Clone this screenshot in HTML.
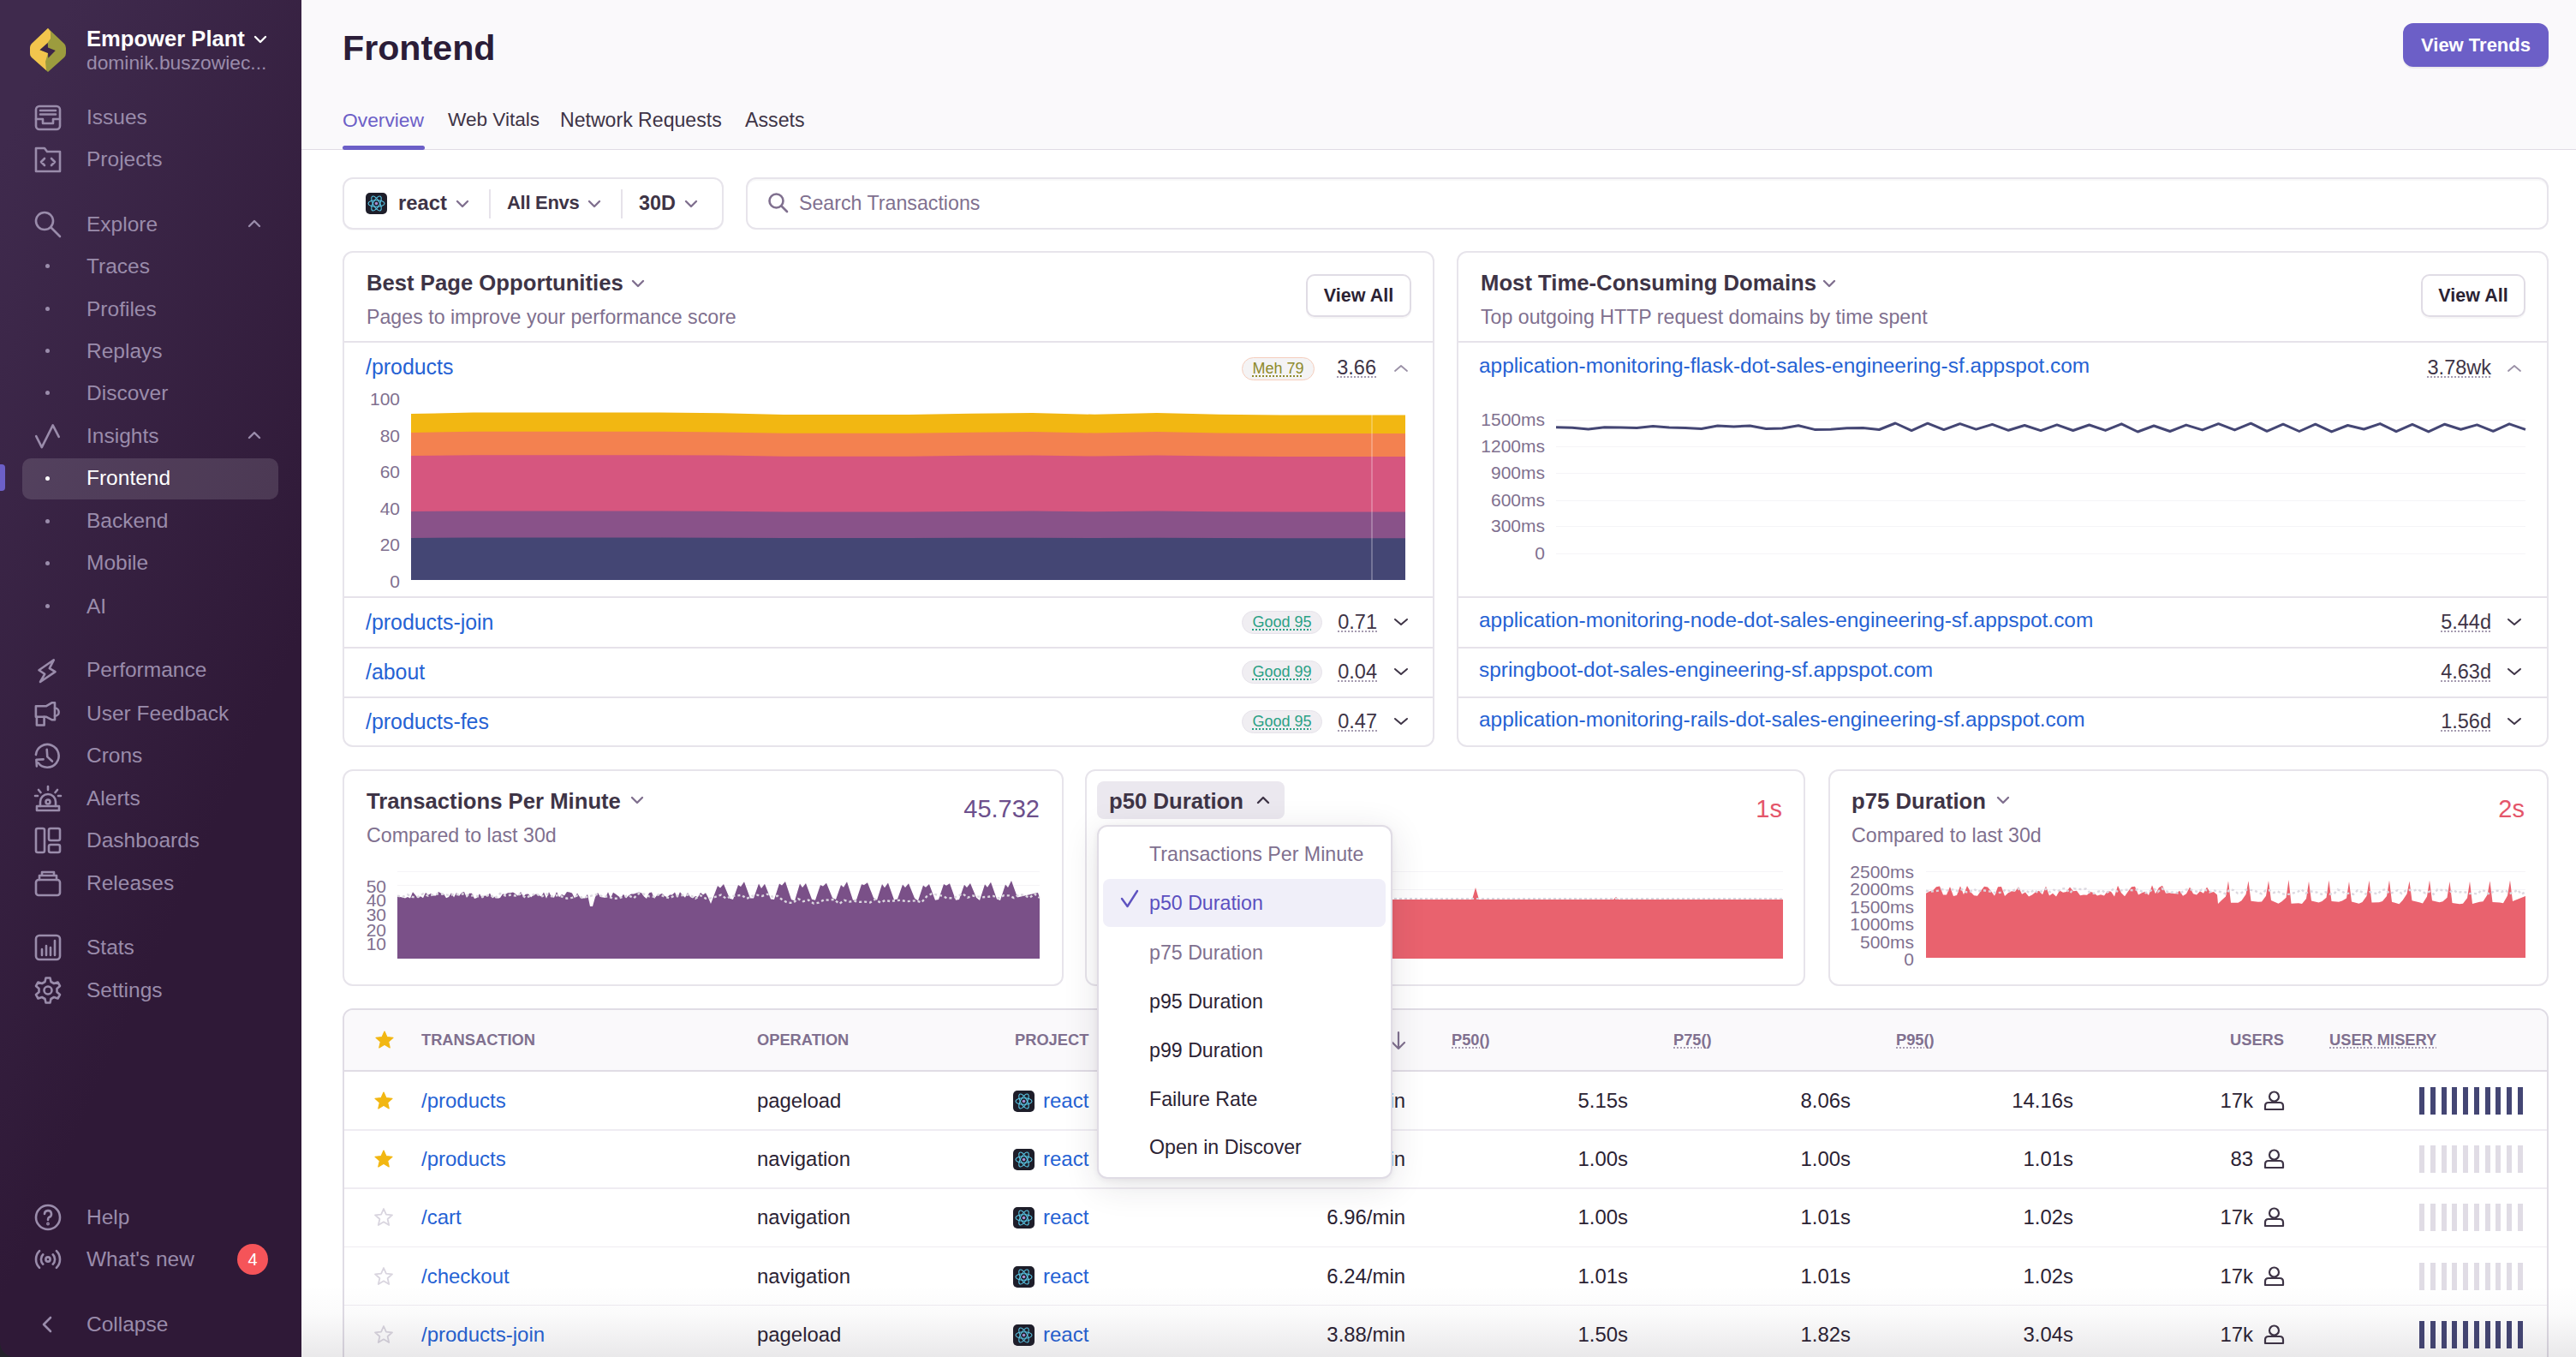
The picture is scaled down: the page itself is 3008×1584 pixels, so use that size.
<!DOCTYPE html>
<html><head><meta charset="utf-8"><title>Frontend</title><style>
*{box-sizing:border-box;margin:0;padding:0}
html,body{width:3008px;height:1584px;overflow:hidden;background:#fff}
#corner{position:absolute;left:0;top:1560px;width:30px;height:24px;background:#24222b}
body{font-family:"Liberation Sans",sans-serif;color:#2b2233;position:relative}
.a{position:absolute;white-space:nowrap}
#sb{position:absolute;left:0;top:0;width:352px;height:1584px;border-bottom-left-radius:17px;
 background:linear-gradient(294.17deg,#2f1937 35.57%,#3f2a4d 92.42%,#3f2a4d 92.42%);overflow:hidden}
.si{position:absolute;left:101px;height:40px;line-height:40px;font-size:24.5px;color:#9a8cab;white-space:nowrap}
.ic{position:absolute;left:38px;width:36px;height:36px}
.dot{position:absolute;left:53px;width:5px;height:5px;border-radius:50%;background:#9a8cab}
#main{position:absolute;left:352px;top:0;width:2656px;height:1584px;background:#fff}
.card{position:absolute;background:#fff;border:2px solid #e7e4eb;border-radius:12px}
.ttl{position:absolute;font-weight:700;font-size:25.7px;color:#3e3446;white-space:nowrap;line-height:36px;height:36px}
.sub{position:absolute;font-size:23.2px;color:#80708f;white-space:nowrap;line-height:36px;height:36px}
.lnk{color:#2562d4}
.btn{position:absolute;border:2px solid #e0dce5;border-radius:10px;background:#fff;font-weight:700;font-size:21.5px;color:#2b2233;text-align:center;box-shadow:0 2px 0 rgba(43,34,51,0.04)}
.hr{position:absolute;height:2px;background:#e6e2ea}
.hr2{position:absolute;height:1.5px;background:#efecf2}
.dotted{border-bottom:2px dotted #80708f}
</style></head>
<body>
<div id="corner"></div><div id="sb">
<svg class="a" style="left:0;top:0" width="352" height="100" viewBox="0 0 352 100">
<path d="M56,33 L75,51 Q77,53 77,56 L77,62 Q77,65 75,67 L56,84 L37,67 Q35,65 35,62 L35,56 Q35,53 37,51 Z" fill="#9c9c3e"/>
<path d="M56,33 L37,51 Q35,53 35,56 L35,62 Q35,65 37,67 L54,82 L53,72 L56,62 L46.5,58.3 L55.5,50 L59,45 L59,37 Z" fill="#f2c54d"/>
<path d="M55.8,50 L46.5,58.3 L56,61.9 L56.3,67.8 L64.8,58.9 L56,55.4 Z" fill="#3c2548"/>
</svg>
<div class="a" style="left:101px;top:27px;height:36px;line-height:36px;font-size:25.6px;font-weight:700;color:#fff">Empower Plant</div>
<svg class="a" style="left:296px;top:40px" width="16" height="12" viewBox="0 0 16 12"><path d="M2,3 L8,9 L14,3" fill="none" stroke="#fff" stroke-width="2.4" stroke-linecap="round" stroke-linejoin="round"/></svg>
<div class="a" style="left:101px;top:55px;height:36px;line-height:36px;font-size:22.8px;color:#9a8cab">dominik.buszowiec...</div>
<svg class="ic" style="top:118.6px" viewBox="0 0 36 36" fill="none" stroke="#9a8cab" stroke-width="2.6" stroke-linecap="round" stroke-linejoin="round"><rect x="4" y="5" width="28" height="27" rx="4"/><path d="M4,20 H12 V25 H24 V20 H32"/><path d="M9,10 H27 M9,14.5 H27"/></svg>
<div class="si" style="top:116.6px">Issues</div>
<svg class="ic" style="top:167.7px" viewBox="0 0 36 36" fill="none" stroke="#9a8cab" stroke-width="2.6" stroke-linecap="round" stroke-linejoin="round"><path d="M4,32 V5 H14 L17,9 H32 V32 Z"/><path d="M14,17 L10,21 L14,25 M22,17 L26,21 L22,25"/></svg>
<div class="si" style="top:165.7px">Projects</div>
<svg class="ic" style="top:243.6px" viewBox="0 0 36 36" fill="none" stroke="#9a8cab" stroke-width="2.6" stroke-linecap="round" stroke-linejoin="round"><circle cx="14" cy="14" r="10"/><path d="M21.5,21.5 L32,32"/></svg>
<div class="si" style="top:241.6px">Explore</div>
<svg class="ic" style="top:491.0px" viewBox="0 0 36 36" fill="none" stroke="#9a8cab" stroke-width="2.6" stroke-linecap="round" stroke-linejoin="round"><path d="M4.2,18.1 L10.8,31.2 L23.7,5.4 L30.7,18.9"/></svg>
<div class="si" style="top:489.0px">Insights</div>
<svg class="ic" style="top:764.0px" viewBox="0 0 36 36" fill="none" stroke="#9a8cab" stroke-width="2.6" stroke-linecap="round" stroke-linejoin="round"><path d="M24.8,6.3 L7.5,18.2 L14.2,22.8 L9,32 L26.5,20.2 L19.8,16.1 Z"/></svg>
<div class="si" style="top:762.0px">Performance</div>
<svg class="ic" style="top:814.6px" viewBox="0 0 36 36" fill="none" stroke="#9a8cab" stroke-width="2.6" stroke-linecap="round" stroke-linejoin="round"><path d="M3.9,9.3 H15.7 L22.9,5.2 H26 V25.3 H22.9 L15.7,21.7 H3.9 Z"/><path d="M4.9,21.7 V31.5 H13.6 V21.7"/><path d="M26,11.5 A4.6,4.6 0 0 1 26,20.8"/></svg>
<div class="si" style="top:812.6px">User Feedback</div>
<svg class="ic" style="top:863.6px" viewBox="0 0 36 36" fill="none" stroke="#9a8cab" stroke-width="2.6" stroke-linecap="round" stroke-linejoin="round"><path d="M3.9,17 A13.4,13.4 0 1 1 6.4,26.3"/><path d="M4.9,30.4 L4.4,22.7 L12.6,22.4"/><path d="M16.7,10.8 L17.3,19.4 L22.9,24.5"/></svg>
<div class="si" style="top:861.6px">Crons</div>
<svg class="ic" style="top:913.8px" viewBox="0 0 36 36" fill="none" stroke="#9a8cab" stroke-width="2.6" stroke-linecap="round" stroke-linejoin="round"><path d="M5,32 H31 V27 H5 Z"/><path d="M9,27 V22 A9,9 0 0 1 27,22 V27"/><circle cx="18" cy="22" r="2.5"/><path d="M18,4 V8 M7,8 L9.5,11 M29,8 L26.5,11 M3,15 H6 M30,15 H33"/></svg>
<div class="si" style="top:911.8px">Alerts</div>
<svg class="ic" style="top:963.0px" viewBox="0 0 36 36" fill="none" stroke="#9a8cab" stroke-width="2.6" stroke-linecap="round" stroke-linejoin="round"><rect x="4" y="4" width="10" height="28" rx="2"/><rect x="19" y="4" width="13" height="14" rx="2"/><rect x="19" y="23" width="13" height="9" rx="2"/></svg>
<div class="si" style="top:961.0px">Dashboards</div>
<svg class="ic" style="top:1013.0px" viewBox="0 0 36 36" fill="none" stroke="#9a8cab" stroke-width="2.6" stroke-linecap="round" stroke-linejoin="round"><rect x="4" y="14" width="28" height="18" rx="3"/><path d="M8,14 V9 H28 V14 M11,9 V5 H25 V9"/></svg>
<div class="si" style="top:1011.0px">Releases</div>
<svg class="ic" style="top:1087.8px" viewBox="0 0 36 36" fill="none" stroke="#9a8cab" stroke-width="2.6" stroke-linecap="round" stroke-linejoin="round"><rect x="4" y="4" width="28" height="28" rx="4"/><path d="M11,27 V20 M16,27 V16 M21,27 V18 M26,27 V10"/></svg>
<div class="si" style="top:1085.8px">Stats</div>
<svg class="ic" style="top:1138.0px" viewBox="0 0 36 36" fill="none" stroke="#9a8cab" stroke-width="2.6" stroke-linecap="round" stroke-linejoin="round"><circle cx="18" cy="18" r="4.5"/><path d="M15.5,3.5 H20.5 L21.5,8 L25,10 L29.5,8.5 L32,13 L28.5,16 V20 L32,23 L29.5,27.5 L25,26 L21.5,28 L20.5,32.5 H15.5 L14.5,28 L11,26 L6.5,27.5 L4,23 L7.5,20 V16 L4,13 L6.5,8.5 L11,10 L14.5,8 Z"/></svg>
<div class="si" style="top:1136.0px">Settings</div>
<svg class="ic" style="top:1403.0px" viewBox="0 0 36 36" fill="none" stroke="#9a8cab" stroke-width="2.6" stroke-linecap="round" stroke-linejoin="round"><circle cx="18" cy="18" r="14"/><path d="M14,14 A4,4 0 1 1 19,18 Q18,19 18,21"/><circle cx="18" cy="25.5" r="0.6" fill="#9a8cab"/></svg>
<div class="si" style="top:1401.0px">Help</div>
<svg class="ic" style="top:1452.0px" viewBox="0 0 36 36" fill="none" stroke="#9a8cab" stroke-width="2.6" stroke-linecap="round" stroke-linejoin="round"><circle cx="18" cy="18" r="2.6"/><path d="M12.3,12.3 A8,8 0 0 0 12.3,23.7 M23.7,12.3 A8,8 0 0 1 23.7,23.7 M8.1,8.1 A14,14 0 0 0 8.1,27.9 M27.9,8.1 A14,14 0 0 1 27.9,27.9"/></svg>
<div class="si" style="top:1450.0px">What's new</div>
<svg class="ic" style="top:1528.0px" viewBox="0 0 36 36" fill="none" stroke="#9a8cab" stroke-width="2.6" stroke-linecap="round" stroke-linejoin="round"><path d="M21,10 L13,18 L21,26"/></svg>
<div class="si" style="top:1526.0px">Collapse</div>
<div class="a" style="left:26px;top:535px;width:299px;height:48px;border-radius:10px;background:rgba(255,255,255,0.13)"></div>
<div class="a" style="left:-3px;top:542px;width:9px;height:31px;border-radius:4px;background:#6c5fc7"></div>
<div class="dot" style="top:308.1px;background:#9a8cab"></div>
<div class="si" style="top:290.6px;color:#9a8cab">Traces</div>
<div class="dot" style="top:358.3px;background:#9a8cab"></div>
<div class="si" style="top:340.8px;color:#9a8cab">Profiles</div>
<div class="dot" style="top:407.4px;background:#9a8cab"></div>
<div class="si" style="top:389.9px;color:#9a8cab">Replays</div>
<div class="dot" style="top:456.4px;background:#9a8cab"></div>
<div class="si" style="top:438.9px;color:#9a8cab">Discover</div>
<div class="dot" style="top:555.5px;background:#fff"></div>
<div class="si" style="top:538.0px;color:#fff">Frontend</div>
<div class="dot" style="top:605.5px;background:#9a8cab"></div>
<div class="si" style="top:588.0px;color:#9a8cab">Backend</div>
<div class="dot" style="top:654.5px;background:#9a8cab"></div>
<div class="si" style="top:637.0px;color:#9a8cab">Mobile</div>
<div class="dot" style="top:705.1px;background:#9a8cab"></div>
<div class="si" style="top:687.6px;color:#9a8cab">AI</div>
<svg class="a" style="left:289px;top:254.6px" width="16" height="12" viewBox="0 0 16 12"><path d="M2,9 L8,3 L14,9" fill="none" stroke="#9a8cab" stroke-width="2.4" stroke-linecap="round" stroke-linejoin="round"/></svg>
<svg class="a" style="left:289px;top:502.0px" width="16" height="12" viewBox="0 0 16 12"><path d="M2,9 L8,3 L14,9" fill="none" stroke="#9a8cab" stroke-width="2.4" stroke-linecap="round" stroke-linejoin="round"/></svg>
<div class="a" style="left:277px;top:1452px;width:36px;height:36px;border-radius:50%;background:#f55459;color:#fff;font-size:20px;line-height:36px;text-align:center">4</div>
</div>
<div class="a" style="left:352px;top:0;width:2656px;height:175px;background:#faf9fb;border-bottom:1px solid #e0dce5"></div>
<div class="a" style="left:400px;top:32px;height:48px;line-height:48px;font-size:41.2px;font-weight:700;color:#2b1d38">Frontend</div>
<div class="a" style="left:400px;top:122px;height:36px;line-height:36px;font-size:22.8px;color:#6c5fc7">Overview</div>
<div class="a" style="left:523px;top:122px;height:36px;line-height:36px;font-size:22.6px;color:#3e3446">Web Vitals</div>
<div class="a" style="left:654px;top:122px;height:36px;line-height:36px;font-size:23.1px;color:#3e3446">Network Requests</div>
<div class="a" style="left:870px;top:122px;height:36px;line-height:36px;font-size:23.2px;color:#3e3446">Assets</div>
<div class="a" style="left:400px;top:170px;width:96px;height:5px;border-radius:3px;background:#6c5fc7"></div>
<div class="a" style="left:2806px;top:27px;width:170px;height:51px;border-radius:12px;background:#6c5fc7;color:#fff;font-weight:700;font-size:22px;line-height:51px;text-align:center;box-shadow:0 2px 0 rgba(0,0,0,0.06)">View Trends</div>
<div class="a" style="left:400px;top:207px;width:445px;height:61px;border:2px solid #e7e4eb;border-radius:12px;background:#fff;box-shadow:0 1px 0 rgba(43,34,51,0.03)"></div>
<div class="a" style="left:571px;top:221px;width:2px;height:34px;background:#e6e2ea"></div>
<div class="a" style="left:725px;top:221px;width:2px;height:34px;background:#e6e2ea"></div>
<svg class="a" style="left:427px;top:225px" width="25" height="25" viewBox="0 0 25 25"><rect width="25" height="25" rx="5" fill="#1e1e2a"/>
<g fill="none" stroke="#61dafb" stroke-width="1.1" opacity="0.9"><ellipse cx="12.5" cy="12.5" rx="9.5" ry="3.8"/><ellipse cx="12.5" cy="12.5" rx="9.5" ry="3.8" transform="rotate(60 12.5 12.5)"/><ellipse cx="12.5" cy="12.5" rx="9.5" ry="3.8" transform="rotate(120 12.5 12.5)"/></g><circle cx="12.5" cy="12.5" r="1.8" fill="#a58fd6"/></svg>
<div class="a" style="left:465px;top:219px;height:36px;line-height:36px;font-size:23.8px;font-weight:700;color:#3e3446">react</div>
<svg class="a" style="left:532px;top:232px" width="16" height="12" viewBox="0 0 16 12"><path d="M2,3 L8.0,9 L14,3" fill="none" stroke="#80708f" stroke-width="2.4" stroke-linecap="round" stroke-linejoin="round"/></svg>
<div class="a" style="left:592px;top:219px;height:36px;line-height:36px;font-size:22px;letter-spacing:-0.3px;font-weight:700;color:#3e3446">All Envs</div>
<svg class="a" style="left:686px;top:232px" width="16" height="12" viewBox="0 0 16 12"><path d="M2,3 L8.0,9 L14,3" fill="none" stroke="#80708f" stroke-width="2.4" stroke-linecap="round" stroke-linejoin="round"/></svg>
<div class="a" style="left:746px;top:219px;height:36px;line-height:36px;font-size:23.4px;font-weight:700;color:#3e3446">30D</div>
<svg class="a" style="left:799px;top:232px" width="16" height="12" viewBox="0 0 16 12"><path d="M2,3 L8.0,9 L14,3" fill="none" stroke="#80708f" stroke-width="2.4" stroke-linecap="round" stroke-linejoin="round"/></svg>
<div class="a" style="left:871px;top:207px;width:2105px;height:61px;border:2px solid #e7e4eb;border-radius:12px;background:#fff;box-shadow:inset 0 2px 0 rgba(43,34,51,0.03)"></div>
<svg class="a" style="left:896px;top:224px" width="26" height="26" viewBox="0 0 26 26" fill="none" stroke="#80708f" stroke-width="2.6" stroke-linecap="round"><circle cx="10.5" cy="10.5" r="8"/><path d="M16.5,16.5 L23,23"/></svg>
<div class="a" style="left:933px;top:219px;height:36px;line-height:36px;font-size:23.2px;color:#80708f">Search Transactions</div>
<div class="card" style="left:400px;top:293px;width:1275px;height:579px"></div>
<div class="ttl" style="left:428px;top:312px">Best Page Opportunities</div>
<svg class="a" style="left:737px;top:325px" width="16" height="12" viewBox="0 0 16 12"><path d="M2,3 L8.0,9 L14,3" fill="none" stroke="#80708f" stroke-width="2.4" stroke-linecap="round" stroke-linejoin="round"/></svg>
<div class="sub" style="left:428px;top:352px">Pages to improve your performance score</div>
<div class="btn" style="left:1525px;top:320px;width:123px;height:50px;line-height:46px">View All</div>
<div class="hr" style="left:402px;top:398px;width:1271px"></div>
<div class="a lnk" style="left:427px;top:410px;height:36px;line-height:36px;font-size:24.9px">/products</div>
<div class="a" style="left:1450px;top:417px;width:85px;height:27px;border-radius:14px;background:#f4f3f4;border:1.5px solid #f5cdbd"></div><div class="a" style="left:1450px;top:417px;width:85px;height:27px;line-height:27px;text-align:center;font-size:18px;color:#8e8a2c"><span style="text-decoration:underline dotted #8e8a2c;text-decoration-thickness:1.5px;text-underline-offset:2px">Meh 79</span></div>
<div class="a" style="right:1401px;top:411px;height:36px;line-height:36px;font-size:23.5px;color:#3e3446"><span style="text-decoration:underline dotted #a59bb0;text-decoration-thickness:1.5px;text-underline-offset:2px">3.66</span></div>
<svg class="a" style="left:1627px;top:424px" width="18" height="12" viewBox="0 0 18 12"><path d="M2,9 L9.0,3 L16,9" fill="none" stroke="#9a90a6" stroke-width="1.8" stroke-linecap="round" stroke-linejoin="round"/></svg>
<div class="a" style="right:2541px;top:454px;height:24px;line-height:24px;font-size:21px;color:#80708f">100</div>
<div class="a" style="right:2541px;top:497px;height:24px;line-height:24px;font-size:21px;color:#80708f">80</div>
<div class="a" style="right:2541px;top:539px;height:24px;line-height:24px;font-size:21px;color:#80708f">60</div>
<div class="a" style="right:2541px;top:582px;height:24px;line-height:24px;font-size:21px;color:#80708f">40</div>
<div class="a" style="right:2541px;top:624px;height:24px;line-height:24px;font-size:21px;color:#80708f">20</div>
<div class="a" style="right:2541px;top:667px;height:24px;line-height:24px;font-size:21px;color:#80708f">0</div>
<svg class="a" style="left:0;top:0" width="3008" height="700" viewBox="0 0 3008 700">
<path d="M480,677 L480.0,483.0 L552.6,481.6 L625.1,481.6 L697.7,481.6 L770.2,481.6 L842.8,482.3 L915.4,484.1 L987.9,484.1 L1060.5,484.1 L1133.1,482.7 L1205.6,482.0 L1278.2,483.8 L1350.8,482.0 L1423.3,483.8 L1495.9,484.5 L1568.4,484.5 L1641.0,484.5 L1641,677 Z" fill="#f2b712"/>
<path d="M480,677 L480.0,505.0 L552.6,503.8 L625.1,503.8 L697.7,503.8 L770.2,503.8 L842.8,504.4 L915.4,505.8 L987.9,505.8 L1060.5,505.8 L1133.1,504.7 L1205.6,504.1 L1278.2,505.5 L1350.8,504.1 L1423.3,505.5 L1495.9,506.1 L1568.4,506.1 L1641.0,506.1 L1641,677 Z" fill="#f38150"/>
<path d="M480,677 L480.0,532.0 L552.6,531.2 L625.1,531.2 L697.7,531.2 L770.2,531.2 L842.8,531.6 L915.4,532.7 L987.9,532.7 L1060.5,532.7 L1133.1,531.8 L1205.6,531.4 L1278.2,532.5 L1350.8,531.4 L1423.3,532.5 L1495.9,532.9 L1568.4,532.9 L1641.0,532.9 L1641,677 Z" fill="#d6567f"/>
<path d="M480,677 L480.0,597.0 L552.6,596.4 L625.1,596.4 L697.7,596.4 L770.2,596.4 L842.8,596.7 L915.4,597.4 L987.9,597.4 L1060.5,597.4 L1133.1,596.9 L1205.6,596.6 L1278.2,597.3 L1350.8,596.6 L1423.3,597.3 L1495.9,597.6 L1568.4,597.6 L1641.0,597.6 L1641,677 Z" fill="#895289"/>
<path d="M480,677 L480.0,627.9 L552.6,627.6 L625.1,627.6 L697.7,627.6 L770.2,627.6 L842.8,627.7 L915.4,628.1 L987.9,628.1 L1060.5,628.1 L1133.1,627.8 L1205.6,627.7 L1278.2,628.0 L1350.8,627.7 L1423.3,628.0 L1495.9,628.2 L1568.4,628.2 L1641.0,628.2 L1641,677 Z" fill="#444674"/>
<line x1="1602" y1="480" x2="1602" y2="677" stroke="#ffffff" stroke-opacity="0.35" stroke-width="1.5"/>
</svg>
<div class="hr" style="left:402px;top:696px;width:1271px"></div>
<div class="a lnk" style="left:427px;top:708px;height:36px;line-height:36px;font-size:24.9px">/products-join</div>
<div class="a" style="left:1450px;top:713px;width:94px;height:27px;border-radius:14px;background:#f0eef2;border:1.5px solid #e6e3ea"></div><div class="a" style="left:1450px;top:713px;width:94px;height:27px;line-height:27px;text-align:center;font-size:18px;color:#2ba185"><span style="text-decoration:underline dotted #2ba185;text-decoration-thickness:1.5px;text-underline-offset:2px">Good 95</span></div>
<div class="a" style="right:1400px;top:708px;height:36px;line-height:36px;font-size:23.5px;color:#3e3446"><span style="text-decoration:underline dotted #a59bb0;text-decoration-thickness:1.5px;text-underline-offset:2px">0.71</span></div>
<svg class="a" style="left:1627px;top:720px" width="18" height="12" viewBox="0 0 18 12"><path d="M2,3 L9.0,9 L16,3" fill="none" stroke="#3e3446" stroke-width="2.0" stroke-linecap="round" stroke-linejoin="round"/></svg>
<div class="hr" style="left:402px;top:755px;width:1271px"></div>
<div class="a lnk" style="left:427px;top:766px;height:36px;line-height:36px;font-size:24.9px">/about</div>
<div class="a" style="left:1450px;top:771px;width:94px;height:27px;border-radius:14px;background:#f0eef2;border:1.5px solid #e6e3ea"></div><div class="a" style="left:1450px;top:771px;width:94px;height:27px;line-height:27px;text-align:center;font-size:18px;color:#2ba185"><span style="text-decoration:underline dotted #2ba185;text-decoration-thickness:1.5px;text-underline-offset:2px">Good 99</span></div>
<div class="a" style="right:1400px;top:766px;height:36px;line-height:36px;font-size:23.5px;color:#3e3446"><span style="text-decoration:underline dotted #a59bb0;text-decoration-thickness:1.5px;text-underline-offset:2px">0.04</span></div>
<svg class="a" style="left:1627px;top:778px" width="18" height="12" viewBox="0 0 18 12"><path d="M2,3 L9.0,9 L16,3" fill="none" stroke="#3e3446" stroke-width="2.0" stroke-linecap="round" stroke-linejoin="round"/></svg>
<div class="hr" style="left:402px;top:813px;width:1271px"></div>
<div class="a lnk" style="left:427px;top:824px;height:36px;line-height:36px;font-size:24.9px">/products-fes</div>
<div class="a" style="left:1450px;top:829px;width:94px;height:27px;border-radius:14px;background:#f0eef2;border:1.5px solid #e6e3ea"></div><div class="a" style="left:1450px;top:829px;width:94px;height:27px;line-height:27px;text-align:center;font-size:18px;color:#2ba185"><span style="text-decoration:underline dotted #2ba185;text-decoration-thickness:1.5px;text-underline-offset:2px">Good 95</span></div>
<div class="a" style="right:1400px;top:824px;height:36px;line-height:36px;font-size:23.5px;color:#3e3446"><span style="text-decoration:underline dotted #a59bb0;text-decoration-thickness:1.5px;text-underline-offset:2px">0.47</span></div>
<svg class="a" style="left:1627px;top:836px" width="18" height="12" viewBox="0 0 18 12"><path d="M2,3 L9.0,9 L16,3" fill="none" stroke="#3e3446" stroke-width="2.0" stroke-linecap="round" stroke-linejoin="round"/></svg>
<div class="card" style="left:1701px;top:293px;width:1275px;height:579px"></div>
<div class="ttl" style="left:1729px;top:312px">Most Time-Consuming Domains</div>
<svg class="a" style="left:2128px;top:325px" width="16" height="12" viewBox="0 0 16 12"><path d="M2,3 L8.0,9 L14,3" fill="none" stroke="#80708f" stroke-width="2.4" stroke-linecap="round" stroke-linejoin="round"/></svg>
<div class="sub" style="left:1729px;top:352px">Top outgoing HTTP request domains by time spent</div>
<div class="btn" style="left:2827px;top:320px;width:122px;height:50px;line-height:46px">View All</div>
<div class="hr" style="left:1703px;top:398px;width:1271px"></div>
<div class="a lnk" style="left:1727px;top:409px;height:36px;line-height:36px;font-size:24.4px">application-monitoring-flask-dot-sales-engineering-sf.appspot.com</div>
<div class="a" style="right:99px;top:411px;height:36px;line-height:36px;font-size:23.5px;color:#3e3446"><span style="text-decoration:underline dotted #a59bb0;text-decoration-thickness:1.5px;text-underline-offset:2px">3.78wk</span></div>
<svg class="a" style="left:2927px;top:424px" width="18" height="12" viewBox="0 0 18 12"><path d="M2,9 L9.0,3 L16,9" fill="none" stroke="#9a90a6" stroke-width="1.8" stroke-linecap="round" stroke-linejoin="round"/></svg>
<div class="a" style="right:1204px;top:478px;height:24px;line-height:24px;font-size:21px;color:#80708f">1500ms</div>
<div class="a" style="left:1817px;top:490px;width:1132px;height:1px;background:#f5f4f7"></div>
<div class="a" style="right:1204px;top:509px;height:24px;line-height:24px;font-size:21px;color:#80708f">1200ms</div>
<div class="a" style="left:1817px;top:521px;width:1132px;height:1px;background:#f5f4f7"></div>
<div class="a" style="right:1204px;top:540px;height:24px;line-height:24px;font-size:21px;color:#80708f">900ms</div>
<div class="a" style="left:1817px;top:552px;width:1132px;height:1px;background:#f5f4f7"></div>
<div class="a" style="right:1204px;top:572px;height:24px;line-height:24px;font-size:21px;color:#80708f">600ms</div>
<div class="a" style="left:1817px;top:584px;width:1132px;height:1px;background:#f5f4f7"></div>
<div class="a" style="right:1204px;top:602px;height:24px;line-height:24px;font-size:21px;color:#80708f">300ms</div>
<div class="a" style="left:1817px;top:614px;width:1132px;height:1px;background:#f5f4f7"></div>
<div class="a" style="right:1204px;top:634px;height:24px;line-height:24px;font-size:21px;color:#80708f">0</div>
<div class="a" style="left:1817px;top:646px;width:1132px;height:1px;background:#f5f4f7"></div>
<svg class="a" style="left:0;top:0" width="3008" height="700" viewBox="0 0 3008 700"><path d="M1817.0,498.8 L1835.9,499.3 L1854.7,501.1 L1873.6,498.8 L1892.5,499.0 L1911.3,499.4 L1930.2,497.4 L1949.1,499.1 L1967.9,499.6 L1986.8,500.5 L2005.7,497.0 L2024.5,498.0 L2043.4,497.0 L2062.3,500.5 L2081.1,500.0 L2100.0,496.7 L2118.9,501.4 L2137.7,501.3 L2156.6,499.8 L2175.5,499.6 L2194.3,501.5 L2213.2,494.0 L2232.1,502.6 L2250.9,494.2 L2269.8,501.6 L2288.7,494.7 L2307.5,501.1 L2326.4,495.4 L2345.3,502.3 L2364.1,496.5 L2383.0,502.6 L2401.9,495.9 L2420.7,502.5 L2439.6,496.0 L2458.5,502.4 L2477.3,494.8 L2496.2,504.0 L2515.1,497.0 L2533.9,503.5 L2552.8,496.1 L2571.7,501.9 L2590.5,494.7 L2609.4,501.9 L2628.3,494.2 L2647.1,503.3 L2666.0,495.2 L2684.9,503.5 L2703.7,495.2 L2722.6,503.9 L2741.5,496.5 L2760.3,501.0 L2779.2,494.6 L2798.1,503.7 L2816.9,495.4 L2835.8,503.9 L2854.7,495.2 L2873.5,501.2 L2892.4,495.9 L2911.3,503.3 L2930.1,494.8 L2949.0,501.3" fill="none" stroke="#444674" stroke-width="3" stroke-linejoin="round"/></svg>
<div class="hr" style="left:1703px;top:696px;width:1271px"></div>
<div class="a lnk" style="left:1727px;top:706px;height:36px;line-height:36px;font-size:24.4px">application-monitoring-node-dot-sales-engineering-sf.appspot.com</div>
<div class="a" style="right:99px;top:708px;height:36px;line-height:36px;font-size:23.5px;color:#3e3446"><span style="text-decoration:underline dotted #a59bb0;text-decoration-thickness:1.5px;text-underline-offset:2px">5.44d</span></div>
<svg class="a" style="left:2927px;top:720px" width="18" height="12" viewBox="0 0 18 12"><path d="M2,3 L9.0,9 L16,3" fill="none" stroke="#3e3446" stroke-width="2.0" stroke-linecap="round" stroke-linejoin="round"/></svg>
<div class="hr" style="left:1703px;top:755px;width:1271px"></div>
<div class="a lnk" style="left:1727px;top:764px;height:36px;line-height:36px;font-size:24.4px">springboot-dot-sales-engineering-sf.appspot.com</div>
<div class="a" style="right:99px;top:766px;height:36px;line-height:36px;font-size:23.5px;color:#3e3446"><span style="text-decoration:underline dotted #a59bb0;text-decoration-thickness:1.5px;text-underline-offset:2px">4.63d</span></div>
<svg class="a" style="left:2927px;top:778px" width="18" height="12" viewBox="0 0 18 12"><path d="M2,3 L9.0,9 L16,3" fill="none" stroke="#3e3446" stroke-width="2.0" stroke-linecap="round" stroke-linejoin="round"/></svg>
<div class="hr" style="left:1703px;top:813px;width:1271px"></div>
<div class="a lnk" style="left:1727px;top:822px;height:36px;line-height:36px;font-size:24.4px">application-monitoring-rails-dot-sales-engineering-sf.appspot.com</div>
<div class="a" style="right:99px;top:824px;height:36px;line-height:36px;font-size:23.5px;color:#3e3446"><span style="text-decoration:underline dotted #a59bb0;text-decoration-thickness:1.5px;text-underline-offset:2px">1.56d</span></div>
<svg class="a" style="left:2927px;top:836px" width="18" height="12" viewBox="0 0 18 12"><path d="M2,3 L9.0,9 L16,3" fill="none" stroke="#3e3446" stroke-width="2.0" stroke-linecap="round" stroke-linejoin="round"/></svg>
<div class="card" style="left:400px;top:898px;width:842px;height:253px"></div>
<div class="ttl" style="left:428px;top:917px">Transactions Per Minute</div>
<svg class="a" style="left:736px;top:928px" width="16" height="12" viewBox="0 0 16 12"><path d="M2,3 L8.0,9 L14,3" fill="none" stroke="#80708f" stroke-width="2.4" stroke-linecap="round" stroke-linejoin="round"/></svg>
<div class="sub" style="left:428px;top:957px">Compared to last 30d</div>
<div class="a" style="right:1794px;top:924px;height:40px;line-height:40px;font-size:29px;color:#6c4f8c">45.732</div>
<div class="a" style="right:2557px;top:1023.5px;height:22px;line-height:22px;font-size:21px;color:#80708f">50</div>
<div class="a" style="right:2557px;top:1040px;height:22px;line-height:22px;font-size:21px;color:#80708f">40</div>
<div class="a" style="right:2557px;top:1057px;height:22px;line-height:22px;font-size:21px;color:#80708f">30</div>
<div class="a" style="right:2557px;top:1074.6px;height:22px;line-height:22px;font-size:21px;color:#80708f">20</div>
<div class="a" style="right:2557px;top:1091px;height:22px;line-height:22px;font-size:21px;color:#80708f">10</div>
<div class="a" style="left:464px;top:1017px;width:750px;height:1px;background:#f5f4f7"></div>
<div class="a" style="left:464px;top:1033px;width:750px;height:1px;background:#f5f4f7"></div>
<svg class="a" style="left:0;top:0" width="3008" height="1584" viewBox="0 0 3008 1584"><path d="M464,1119 L464.0,1046.0 L467.0,1046.9 L470.0,1047.4 L473.0,1048.5 L476.0,1046.9 L479.0,1048.4 L482.0,1041.2 L485.0,1044.7 L488.0,1048.5 L491.0,1046.2 L494.0,1048.2 L497.0,1041.9 L500.0,1044.8 L503.0,1043.0 L506.0,1045.4 L509.0,1045.6 L512.0,1041.1 L515.0,1042.7 L518.0,1043.2 L521.0,1048.3 L524.0,1047.1 L527.0,1042.3 L530.0,1047.4 L533.0,1042.1 L536.0,1045.9 L539.0,1042.0 L542.0,1041.0 L545.0,1048.0 L548.0,1042.7 L551.0,1042.7 L554.0,1048.9 L557.0,1048.0 L560.0,1043.3 L563.0,1048.7 L566.0,1045.3 L569.0,1046.4 L572.0,1042.6 L575.0,1048.5 L578.0,1046.5 L581.0,1048.7 L584.0,1048.1 L587.0,1043.4 L590.0,1043.9 L593.0,1042.3 L596.0,1042.2 L599.0,1041.5 L602.0,1043.4 L605.0,1045.8 L608.0,1041.0 L611.0,1046.4 L614.0,1043.7 L617.0,1043.5 L620.0,1047.5 L623.0,1044.8 L626.0,1043.5 L629.0,1044.8 L632.0,1046.6 L635.0,1041.5 L638.0,1048.8 L641.0,1041.2 L644.0,1047.0 L647.0,1047.8 L650.0,1041.1 L653.0,1047.3 L656.0,1043.9 L659.0,1045.6 L662.0,1041.1 L665.0,1041.4 L668.0,1042.4 L671.0,1048.6 L674.0,1042.6 L677.0,1047.0 L680.0,1048.4 L683.0,1048.5 L686.0,1043.8 L689.0,1058.0 L692.0,1058.0 L695.0,1047.2 L698.0,1041.9 L701.0,1047.0 L704.0,1047.4 L707.0,1047.9 L710.0,1041.3 L713.0,1048.6 L716.0,1041.7 L719.0,1043.7 L722.0,1045.9 L725.0,1048.3 L728.0,1043.7 L731.0,1048.4 L734.0,1045.4 L737.0,1043.5 L740.0,1043.5 L743.0,1042.4 L746.0,1041.6 L749.0,1042.2 L752.0,1046.5 L755.0,1049.0 L758.0,1042.3 L761.0,1041.4 L764.0,1048.9 L767.0,1045.3 L770.0,1044.2 L773.0,1042.9 L776.0,1045.8 L779.0,1047.6 L782.0,1044.6 L785.0,1044.4 L788.0,1041.4 L791.0,1048.3 L794.0,1041.3 L797.0,1044.9 L800.0,1047.7 L803.0,1042.0 L806.0,1046.9 L809.0,1048.6 L812.0,1046.0 L815.0,1047.3 L818.0,1041.9 L821.0,1044.5 L824.0,1042.2 L827.0,1047.8 L830.0,1055.0 L832.0,1049.8 L838.0,1034.0 L841.0,1036.4 L845.0,1031.9 L852.0,1048.8 L856.0,1050.0 L862.0,1032.9 L865.0,1034.9 L869.0,1029.2 L876.0,1048.6 L880.0,1048.6 L886.0,1031.5 L889.0,1037.0 L893.0,1031.8 L900.0,1049.5 L904.0,1050.0 L910.0,1031.4 L913.0,1033.4 L917.0,1029.1 L924.0,1050.1 L928.0,1051.5 L934.0,1031.4 L937.0,1036.1 L941.0,1031.1 L948.0,1049.8 L952.0,1050.7 L958.0,1033.0 L961.0,1034.5 L965.0,1030.8 L972.0,1048.1 L976.0,1049.9 L982.0,1033.1 L985.0,1035.8 L989.0,1029.2 L996.0,1050.8 L1000.0,1050.6 L1006.0,1032.3 L1009.0,1033.0 L1013.0,1030.2 L1020.0,1048.0 L1024.0,1050.7 L1030.0,1031.9 L1033.0,1036.3 L1037.0,1030.6 L1044.0,1050.2 L1048.0,1049.4 L1054.0,1032.6 L1057.0,1036.0 L1061.0,1031.3 L1068.0,1048.4 L1072.0,1051.4 L1078.0,1033.5 L1081.0,1035.8 L1085.0,1031.9 L1092.0,1050.8 L1096.0,1050.1 L1102.0,1032.1 L1105.0,1033.7 L1109.0,1031.3 L1116.0,1050.7 L1120.0,1049.9 L1126.0,1032.8 L1129.0,1035.9 L1133.0,1030.9 L1140.0,1047.7 L1144.0,1051.1 L1150.0,1032.3 L1153.0,1035.7 L1157.0,1029.7 L1164.0,1049.5 L1168.0,1051.1 L1174.0,1032.5 L1177.0,1035.9 L1181.0,1028.1 L1188.0,1047.6 L1212.0,1042.0 L1214.0,1048.0 L1214,1119 Z" fill="#7a5088"/><path d="M464.0,1045.6 L470.0,1046.9 L476.0,1044.3 L482.0,1047.1 L488.0,1046.8 L494.0,1043.3 L500.0,1045.8 L506.0,1044.4 L512.0,1043.3 L518.0,1043.8 L524.0,1044.9 L530.0,1044.1 L536.0,1044.2 L542.0,1043.2 L548.0,1045.8 L554.0,1045.3 L560.0,1046.7 L566.0,1046.5 L572.0,1044.4 L578.0,1048.4 L584.0,1043.0 L590.0,1045.4 L596.0,1044.7 L602.0,1045.5 L608.0,1043.7 L614.0,1048.0 L620.0,1045.2 L626.0,1043.2 L632.0,1046.7 L638.0,1043.6 L644.0,1046.3 L650.0,1045.0 L656.0,1046.5 L662.0,1048.7 L668.0,1047.9 L674.0,1045.5 L680.0,1047.9 L686.0,1046.9 L692.0,1045.2 L698.0,1043.9 L704.0,1046.6 L710.0,1046.4 L716.0,1048.7 L722.0,1048.8 L728.0,1046.7 L734.0,1045.1 L740.0,1048.4 L746.0,1043.0 L752.0,1043.6 L758.0,1046.4 L764.0,1046.7 L770.0,1043.8 L776.0,1046.8 L782.0,1048.3 L788.0,1045.3 L794.0,1045.6 L800.0,1044.4 L806.0,1044.7 L812.0,1048.8 L818.0,1045.3 L824.0,1048.8 L830.0,1048.5 L836.0,1046.6 L842.0,1044.6 L848.0,1048.9 L854.0,1046.0 L860.0,1045.5 L866.0,1044.9 L872.0,1048.9 L878.0,1046.0 L884.0,1044.7 L890.0,1045.9 L896.0,1043.7 L902.0,1046.7 L908.0,1045.7 L914.0,1050.8 L920.0,1053.7 L926.0,1054.0 L932.0,1049.1 L938.0,1052.2 L944.0,1050.6 L950.0,1054.6 L956.0,1053.7 L962.0,1050.5 L968.0,1050.6 L974.0,1049.9 L980.0,1054.9 L986.0,1050.8 L992.0,1052.6 L998.0,1051.8 L1004.0,1052.9 L1010.0,1052.6 L1016.0,1053.5 L1022.0,1049.7 L1028.0,1053.6 L1034.0,1050.8 L1040.0,1052.2 L1046.0,1051.0 L1052.0,1050.8 L1058.0,1052.2 L1064.0,1051.8 L1070.0,1051.2 L1076.0,1053.5 L1082.0,1046.5 L1088.0,1043.2 L1094.0,1044.5 L1100.0,1045.7 L1106.0,1048.5 L1112.0,1048.3 L1118.0,1046.3 L1124.0,1043.1 L1130.0,1047.7 L1136.0,1045.6 L1142.0,1046.5 L1148.0,1047.2 L1154.0,1046.8 L1160.0,1045.9 L1166.0,1048.5 L1172.0,1045.3 L1178.0,1045.4 L1184.0,1048.1 L1190.0,1044.2 L1196.0,1044.8 L1202.0,1048.0 L1208.0,1043.4 L1214.0,1048.0" fill="none" stroke="#dcd8e0" stroke-width="2.4" stroke-dasharray="3 3"/></svg>
<div class="card" style="left:1267px;top:898px;width:841px;height:253px"></div>
<div class="a" style="left:1281px;top:912px;width:219px;height:44px;border-radius:8px;background:#ebe8ef"></div>
<div class="ttl" style="left:1295px;top:917px">p50 Duration</div>
<svg class="a" style="left:1467px;top:928px" width="16" height="12" viewBox="0 0 16 12"><path d="M2,9 L8.0,3 L14,9" fill="none" stroke="#3e3446" stroke-width="2.4" stroke-linecap="round" stroke-linejoin="round"/></svg>
<div class="a" style="right:927px;top:924px;height:40px;line-height:40px;font-size:29px;color:#e4566a">1s</div>
<div class="a" style="left:1290px;top:1017px;width:792px;height:1px;background:#f5f4f7"></div>
<div class="a" style="left:1290px;top:1038px;width:792px;height:1px;background:#f5f4f7"></div>
<svg class="a" style="left:0;top:0" width="3008" height="1584" viewBox="0 0 3008 1584"><path d="M1400,1119 L1400,1050 L1719,1050 L1723,1036 L1727,1050 L1884,1050 L1887,1047 L1890,1050 L2082,1050 L2082,1119 Z" fill="#e9626e"/><path d="M1400,1049 L2082,1049" stroke="#d9d5de" stroke-width="2" stroke-dasharray="3 3"/></svg>
<div class="card" style="left:2135px;top:898px;width:841px;height:253px"></div>
<div class="ttl" style="left:2162px;top:917px">p75 Duration</div>
<svg class="a" style="left:2331px;top:928px" width="16" height="12" viewBox="0 0 16 12"><path d="M2,3 L8.0,9 L14,3" fill="none" stroke="#80708f" stroke-width="2.4" stroke-linecap="round" stroke-linejoin="round"/></svg>
<div class="sub" style="left:2162px;top:957px">Compared to last 30d</div>
<div class="a" style="right:60px;top:924px;height:40px;line-height:40px;font-size:29px;color:#e4566a">2s</div>
<div class="a" style="right:773px;top:1007px;height:22px;line-height:22px;font-size:21px;color:#80708f">2500ms</div>
<div class="a" style="right:773px;top:1027px;height:22px;line-height:22px;font-size:21px;color:#80708f">2000ms</div>
<div class="a" style="right:773px;top:1047.6px;height:22px;line-height:22px;font-size:21px;color:#80708f">1500ms</div>
<div class="a" style="right:773px;top:1068px;height:22px;line-height:22px;font-size:21px;color:#80708f">1000ms</div>
<div class="a" style="right:773px;top:1088.6px;height:22px;line-height:22px;font-size:21px;color:#80708f">500ms</div>
<div class="a" style="right:773px;top:1108.6px;height:22px;line-height:22px;font-size:21px;color:#80708f">0</div>
<div class="a" style="left:2249px;top:1017px;width:700px;height:1px;background:#f5f4f7"></div>
<div class="a" style="left:2249px;top:1038px;width:700px;height:1px;background:#f5f4f7"></div>
<svg class="a" style="left:0;top:0" width="3008" height="1584" viewBox="0 0 3008 1584"><path d="M2249,1118 L2249.0,1040.0 L2249.0,1042.7 L2253.0,1040.5 L2257.0,1039.5 L2261.0,1035.2 L2265.0,1034.5 L2269.0,1044.4 L2273.0,1044.6 L2277.0,1035.0 L2281.0,1046.0 L2285.0,1044.9 L2289.0,1034.2 L2293.0,1044.2 L2297.0,1034.1 L2301.0,1041.0 L2305.0,1045.2 L2309.0,1045.7 L2313.0,1039.9 L2317.0,1034.7 L2321.0,1035.4 L2325.0,1040.3 L2329.0,1045.8 L2333.0,1035.2 L2337.0,1035.0 L2341.0,1045.9 L2345.0,1042.3 L2349.0,1040.2 L2353.0,1040.7 L2357.0,1035.2 L2361.0,1043.7 L2365.0,1041.4 L2369.0,1046.5 L2373.0,1044.4 L2377.0,1041.2 L2381.0,1039.8 L2385.0,1044.2 L2389.0,1034.4 L2393.0,1045.5 L2397.0,1042.7 L2401.0,1046.4 L2405.0,1039.6 L2409.0,1041.8 L2413.0,1041.0 L2417.0,1035.5 L2421.0,1040.2 L2425.0,1039.7 L2429.0,1045.2 L2433.0,1044.5 L2437.0,1044.7 L2441.0,1041.1 L2445.0,1042.3 L2449.0,1045.5 L2453.0,1044.2 L2457.0,1045.4 L2461.0,1039.9 L2465.0,1040.7 L2469.0,1046.4 L2473.0,1033.8 L2477.0,1042.2 L2481.0,1046.3 L2485.0,1040.5 L2489.0,1035.2 L2493.0,1034.8 L2497.0,1044.4 L2501.0,1042.2 L2505.0,1040.7 L2509.0,1044.9 L2513.0,1033.2 L2517.0,1043.2 L2521.0,1036.1 L2525.0,1033.7 L2529.0,1042.7 L2533.0,1042.2 L2537.0,1042.9 L2541.0,1043.2 L2545.0,1039.7 L2549.0,1045.7 L2553.0,1043.2 L2557.0,1035.6 L2561.0,1043.3 L2565.0,1044.6 L2569.0,1040.2 L2573.0,1042.7 L2577.0,1035.4 L2581.0,1042.1 L2585.0,1041.1 L2589.0,1044.6 L2590.0,1055.1 L2594.0,1051.1 L2599.0,1046.6 L2602.0,1028.2 L2605.0,1053.7 L2613.5,1053.7 L2617.5,1051.3 L2622.5,1044.1 L2625.5,1028.2 L2628.5,1051.7 L2637.0,1052.7 L2641.0,1052.4 L2646.0,1045.8 L2649.0,1028.1 L2652.0,1051.1 L2660.5,1054.8 L2664.5,1052.3 L2669.5,1047.7 L2672.5,1027.0 L2675.5,1054.8 L2684.0,1054.3 L2688.0,1054.9 L2693.0,1048.9 L2696.0,1028.7 L2699.0,1051.4 L2707.5,1053.5 L2711.5,1051.9 L2716.5,1047.7 L2719.5,1027.4 L2722.5,1051.9 L2731.0,1052.8 L2735.0,1051.5 L2740.0,1048.6 L2743.0,1029.0 L2746.0,1052.5 L2754.5,1054.7 L2758.5,1052.9 L2763.5,1046.1 L2766.5,1027.7 L2769.5,1053.5 L2778.0,1053.2 L2782.0,1052.0 L2787.0,1046.1 L2790.0,1027.4 L2793.0,1052.8 L2801.5,1055.3 L2805.5,1051.1 L2810.5,1043.6 L2813.5,1028.6 L2816.5,1051.2 L2825.0,1053.3 L2829.0,1054.4 L2834.0,1046.6 L2837.0,1027.4 L2840.0,1051.2 L2848.5,1053.3 L2852.5,1052.2 L2857.5,1047.8 L2860.5,1029.0 L2863.5,1054.1 L2872.0,1055.2 L2876.0,1054.7 L2881.0,1048.3 L2884.0,1028.8 L2887.0,1054.9 L2895.5,1052.8 L2899.5,1052.3 L2904.5,1044.5 L2907.5,1028.2 L2910.5,1053.0 L2919.0,1053.5 L2923.0,1054.3 L2928.0,1045.4 L2931.0,1027.4 L2934.0,1052.1 L2949.0,1046.0 L2949,1118 Z" fill="#e9626e"/><path d="M2249.0,1039.8 L2253.7,1040.7 L2258.3,1040.4 L2263.0,1039.6 L2267.7,1038.1 L2272.3,1039.4 L2277.0,1039.0 L2281.7,1038.0 L2286.3,1040.3 L2291.0,1038.1 L2295.7,1041.3 L2300.3,1041.0 L2305.0,1037.8 L2309.7,1040.8 L2314.3,1039.0 L2319.0,1039.7 L2323.7,1040.6 L2328.3,1041.6 L2333.0,1042.3 L2337.7,1041.4 L2342.3,1038.3 L2347.0,1040.3 L2351.7,1039.0 L2356.3,1037.1 L2361.0,1040.3 L2365.7,1039.8 L2370.3,1042.2 L2375.0,1038.9 L2379.7,1042.0 L2384.3,1040.1 L2389.0,1037.6 L2393.7,1041.3 L2398.3,1038.7 L2403.0,1040.2 L2407.7,1037.4 L2412.3,1037.1 L2417.0,1042.5 L2421.7,1037.3 L2426.3,1037.9 L2431.0,1038.0 L2435.7,1037.6 L2440.3,1041.9 L2445.0,1043.0 L2449.7,1040.9 L2454.3,1039.4 L2459.0,1042.3 L2463.7,1040.0 L2468.3,1037.8 L2473.0,1041.1 L2477.7,1039.2 L2482.3,1038.6 L2487.0,1038.9 L2491.7,1039.3 L2496.3,1038.1 L2501.0,1040.7 L2505.7,1042.2 L2510.3,1040.4 L2515.0,1037.1 L2519.7,1041.1 L2524.3,1037.1 L2529.0,1039.9 L2533.7,1042.2 L2538.3,1041.1 L2543.0,1042.4 L2547.7,1041.5 L2552.3,1038.6 L2557.0,1037.9 L2561.7,1039.7 L2566.3,1041.1 L2571.0,1038.4 L2575.7,1039.0 L2580.3,1041.5 L2585.0,1039.1 L2589.7,1040.6 L2594.3,1041.3 L2599.0,1043.6 L2603.7,1038.2 L2608.3,1039.1 L2613.0,1042.7 L2617.7,1042.0 L2622.3,1038.6 L2627.0,1038.8 L2631.7,1039.3 L2636.3,1041.3 L2641.0,1043.4 L2645.7,1039.3 L2650.3,1039.2 L2655.0,1042.1 L2659.7,1040.5 L2664.3,1043.1 L2669.0,1044.0 L2673.7,1043.6 L2678.3,1042.3 L2683.0,1041.0 L2687.7,1038.4 L2692.3,1042.8 L2697.0,1040.4 L2701.7,1040.8 L2706.3,1041.8 L2711.0,1043.8 L2715.7,1041.3 L2720.3,1043.5 L2725.0,1043.8 L2729.7,1038.5 L2734.3,1040.1 L2739.0,1043.3 L2743.7,1042.6 L2748.3,1043.8 L2753.0,1039.1 L2757.7,1041.2 L2762.3,1043.6 L2767.0,1041.2 L2771.7,1042.0 L2776.3,1043.8 L2781.0,1039.0 L2785.7,1038.3 L2790.3,1043.1 L2795.0,1041.5 L2799.7,1039.2 L2804.3,1043.0 L2809.0,1039.7 L2813.7,1038.8 L2818.3,1039.8 L2823.0,1038.2 L2827.7,1040.4 L2832.3,1042.7 L2837.0,1040.7 L2841.7,1043.8 L2846.3,1038.3 L2851.0,1039.0 L2855.7,1038.9 L2860.3,1041.4 L2865.0,1039.2 L2869.7,1042.0 L2874.3,1041.1 L2879.0,1041.5 L2883.7,1043.1 L2888.3,1042.7 L2893.0,1043.5 L2897.7,1038.9 L2902.3,1040.3 L2907.0,1043.8 L2911.7,1040.4 L2916.3,1039.7 L2921.0,1040.9 L2925.7,1039.1 L2930.3,1043.1 L2935.0,1041.8 L2939.7,1038.6 L2944.3,1043.8 L2949.0,1041.1" fill="none" stroke="#dcd8e0" stroke-width="2.4" stroke-dasharray="3 3"/></svg>
<div class="a" style="left:400px;top:1177px;width:2576px;height:420px;border:2px solid #e0dce5;border-radius:12px;background:#fff;overflow:hidden"><div style="position:absolute;left:0;top:0;width:100%;height:72px;background:#faf9fb;border-bottom:2px solid #e0dce5"></div></div>
<svg class="a" style="left:437px;top:1202px" width="24" height="24" viewBox="0 0 24 24"><path d="M12,2 L14.9,8.6 L22,9.3 L16.6,14 L18.2,21 L12,17.3 L5.8,21 L7.4,14 L2,9.3 L9.1,8.6 Z" fill="#f2b712" stroke="#f2b712" stroke-width="1.2" stroke-linejoin="round"/></svg>
<div class="a" style="left:492px;top:1201px;height:26px;line-height:26px;font-size:18.3px;font-weight:700;color:#80708f">TRANSACTION</div>
<div class="a" style="left:884px;top:1201px;height:26px;line-height:26px;font-size:18.3px;font-weight:700;color:#80708f">OPERATION</div>
<div class="a" style="left:1185px;top:1201px;height:26px;line-height:26px;font-size:18.3px;font-weight:700;color:#80708f">PROJECT</div>
<svg class="a" style="left:1624px;top:1203px" width="18" height="24" viewBox="0 0 18 24" fill="none" stroke="#80708f" stroke-width="2.2" stroke-linecap="round" stroke-linejoin="round"><path d="M9,2 V21 M2,14 L9,21 L16,14"/></svg>
<div class="a" style="left:1695px;top:1201px;height:26px;line-height:26px;font-size:18.3px;font-weight:700;color:#80708f"><span style="text-decoration:underline dotted #a79cb3;text-decoration-thickness:1.5px;text-underline-offset:2px">P50()</span></div>
<div class="a" style="left:1954px;top:1201px;height:26px;line-height:26px;font-size:18.3px;font-weight:700;color:#80708f"><span style="text-decoration:underline dotted #a79cb3;text-decoration-thickness:1.5px;text-underline-offset:2px">P75()</span></div>
<div class="a" style="left:2214px;top:1201px;height:26px;line-height:26px;font-size:18.3px;font-weight:700;color:#80708f"><span style="text-decoration:underline dotted #a79cb3;text-decoration-thickness:1.5px;text-underline-offset:2px">P95()</span></div>
<div class="a" style="left:2604px;top:1201px;height:26px;line-height:26px;font-size:18.3px;font-weight:700;color:#80708f">USERS</div>
<div class="a" style="left:2720px;top:1201px;height:26px;line-height:26px;font-size:18.3px;font-weight:700;color:#80708f"><span style="text-decoration:underline dotted #a79cb3;text-decoration-thickness:1.5px;text-underline-offset:2px">USER MISERY</span></div>
<svg class="a" style="left:436px;top:1273px" width="24" height="24" viewBox="0 0 24 24"><path d="M12,2 L14.9,8.6 L22,9.3 L16.6,14 L18.2,21 L12,17.3 L5.8,21 L7.4,14 L2,9.3 L9.1,8.6 Z" fill="#f2b712" stroke="#f2b712" stroke-width="1.2" stroke-linejoin="round"/></svg>
<div class="a lnk" style="left:492px;top:1267.0px;height:36px;line-height:36px;font-size:24px">/products</div>
<div class="a" style="left:884px;top:1267.0px;height:36px;line-height:36px;font-size:23.9px;color:#2b2233">pageload</div>
<svg class="a" style="left:1183px;top:1273px" width="25" height="25" viewBox="0 0 25 25"><rect width="25" height="25" rx="5" fill="#1e1e2a"/>
<g fill="none" stroke="#61dafb" stroke-width="1.1" opacity="0.9"><ellipse cx="12.5" cy="12.5" rx="9.5" ry="3.8"/><ellipse cx="12.5" cy="12.5" rx="9.5" ry="3.8" transform="rotate(60 12.5 12.5)"/><ellipse cx="12.5" cy="12.5" rx="9.5" ry="3.8" transform="rotate(120 12.5 12.5)"/></g><circle cx="12.5" cy="12.5" r="1.8" fill="#a58fd6"/></svg>
<div class="a lnk" style="left:1218px;top:1267.0px;height:36px;line-height:36px;font-size:24px">react</div>
<div class="a" style="right:1367px;top:1267.0px;height:36px;line-height:36px;font-size:23.9px;color:#2b2233">45.73/min</div>
<div class="a" style="right:1107px;top:1267.0px;height:36px;line-height:36px;font-size:23.9px;color:#2b2233">5.15s</div>
<div class="a" style="right:847px;top:1267.0px;height:36px;line-height:36px;font-size:23.9px;color:#2b2233">8.06s</div>
<div class="a" style="right:587px;top:1267.0px;height:36px;line-height:36px;font-size:23.9px;color:#2b2233">14.16s</div>
<div class="a" style="right:377px;top:1267.0px;height:36px;line-height:36px;font-size:23.9px;color:#2b2233">17k</div>
<svg class="a" style="left:2643px;top:1272px" width="25" height="25" viewBox="0 0 25 25" fill="none" stroke="#3e3446" stroke-width="2.2" stroke-linejoin="round"><circle cx="12.5" cy="8" r="5.5"/><path d="M2,23 V19 Q2,15 6,15 H19 Q23,15 23,19 V23 Z"/></svg>
<div class="a" style="left:2825.0px;top:1269px;width:6px;height:32px;background:#444674"></div><div class="a" style="left:2837.8px;top:1269px;width:6px;height:32px;background:#444674"></div><div class="a" style="left:2850.5px;top:1269px;width:6px;height:32px;background:#444674"></div><div class="a" style="left:2863.2px;top:1269px;width:6px;height:32px;background:#444674"></div><div class="a" style="left:2876.0px;top:1269px;width:6px;height:32px;background:#444674"></div><div class="a" style="left:2888.8px;top:1269px;width:6px;height:32px;background:#444674"></div><div class="a" style="left:2901.5px;top:1269px;width:6px;height:32px;background:#444674"></div><div class="a" style="left:2914.2px;top:1269px;width:6px;height:32px;background:#444674"></div><div class="a" style="left:2927.0px;top:1269px;width:6px;height:32px;background:#444674"></div><div class="a" style="left:2939.8px;top:1269px;width:6px;height:32px;background:#444674"></div>
<div class="a" style="left:402px;top:1318.2px;width:2572px;height:1.5px;background:#efecf2"></div>
<svg class="a" style="left:436px;top:1341px" width="24" height="24" viewBox="0 0 24 24"><path d="M12,2 L14.9,8.6 L22,9.3 L16.6,14 L18.2,21 L12,17.3 L5.8,21 L7.4,14 L2,9.3 L9.1,8.6 Z" fill="#f2b712" stroke="#f2b712" stroke-width="1.2" stroke-linejoin="round"/></svg>
<div class="a lnk" style="left:492px;top:1335.2px;height:36px;line-height:36px;font-size:24px">/products</div>
<div class="a" style="left:884px;top:1335.2px;height:36px;line-height:36px;font-size:23.9px;color:#2b2233">navigation</div>
<svg class="a" style="left:1183px;top:1341px" width="25" height="25" viewBox="0 0 25 25"><rect width="25" height="25" rx="5" fill="#1e1e2a"/>
<g fill="none" stroke="#61dafb" stroke-width="1.1" opacity="0.9"><ellipse cx="12.5" cy="12.5" rx="9.5" ry="3.8"/><ellipse cx="12.5" cy="12.5" rx="9.5" ry="3.8" transform="rotate(60 12.5 12.5)"/><ellipse cx="12.5" cy="12.5" rx="9.5" ry="3.8" transform="rotate(120 12.5 12.5)"/></g><circle cx="12.5" cy="12.5" r="1.8" fill="#a58fd6"/></svg>
<div class="a lnk" style="left:1218px;top:1335.2px;height:36px;line-height:36px;font-size:24px">react</div>
<div class="a" style="right:1367px;top:1335.2px;height:36px;line-height:36px;font-size:23.9px;color:#2b2233">8.12/min</div>
<div class="a" style="right:1107px;top:1335.2px;height:36px;line-height:36px;font-size:23.9px;color:#2b2233">1.00s</div>
<div class="a" style="right:847px;top:1335.2px;height:36px;line-height:36px;font-size:23.9px;color:#2b2233">1.00s</div>
<div class="a" style="right:587px;top:1335.2px;height:36px;line-height:36px;font-size:23.9px;color:#2b2233">1.01s</div>
<div class="a" style="right:377px;top:1335.2px;height:36px;line-height:36px;font-size:23.9px;color:#2b2233">83</div>
<svg class="a" style="left:2643px;top:1340px" width="25" height="25" viewBox="0 0 25 25" fill="none" stroke="#3e3446" stroke-width="2.2" stroke-linejoin="round"><circle cx="12.5" cy="8" r="5.5"/><path d="M2,23 V19 Q2,15 6,15 H19 Q23,15 23,19 V23 Z"/></svg>
<div class="a" style="left:2825.0px;top:1337px;width:6px;height:32px;background:#e0dce5"></div><div class="a" style="left:2837.8px;top:1337px;width:6px;height:32px;background:#e0dce5"></div><div class="a" style="left:2850.5px;top:1337px;width:6px;height:32px;background:#e0dce5"></div><div class="a" style="left:2863.2px;top:1337px;width:6px;height:32px;background:#e0dce5"></div><div class="a" style="left:2876.0px;top:1337px;width:6px;height:32px;background:#e0dce5"></div><div class="a" style="left:2888.8px;top:1337px;width:6px;height:32px;background:#e0dce5"></div><div class="a" style="left:2901.5px;top:1337px;width:6px;height:32px;background:#e0dce5"></div><div class="a" style="left:2914.2px;top:1337px;width:6px;height:32px;background:#e0dce5"></div><div class="a" style="left:2927.0px;top:1337px;width:6px;height:32px;background:#e0dce5"></div><div class="a" style="left:2939.8px;top:1337px;width:6px;height:32px;background:#e0dce5"></div>
<div class="a" style="left:402px;top:1386.4px;width:2572px;height:1.5px;background:#efecf2"></div>
<svg class="a" style="left:436px;top:1409px" width="24" height="24" viewBox="0 0 24 24"><path d="M12,2 L14.9,8.6 L22,9.3 L16.6,14 L18.2,21 L12,17.3 L5.8,21 L7.4,14 L2,9.3 L9.1,8.6 Z" fill="none" stroke="#d9d5df" stroke-width="1.8" stroke-linejoin="round"/></svg>
<div class="a lnk" style="left:492px;top:1403.4px;height:36px;line-height:36px;font-size:24px">/cart</div>
<div class="a" style="left:884px;top:1403.4px;height:36px;line-height:36px;font-size:23.9px;color:#2b2233">navigation</div>
<svg class="a" style="left:1183px;top:1409px" width="25" height="25" viewBox="0 0 25 25"><rect width="25" height="25" rx="5" fill="#1e1e2a"/>
<g fill="none" stroke="#61dafb" stroke-width="1.1" opacity="0.9"><ellipse cx="12.5" cy="12.5" rx="9.5" ry="3.8"/><ellipse cx="12.5" cy="12.5" rx="9.5" ry="3.8" transform="rotate(60 12.5 12.5)"/><ellipse cx="12.5" cy="12.5" rx="9.5" ry="3.8" transform="rotate(120 12.5 12.5)"/></g><circle cx="12.5" cy="12.5" r="1.8" fill="#a58fd6"/></svg>
<div class="a lnk" style="left:1218px;top:1403.4px;height:36px;line-height:36px;font-size:24px">react</div>
<div class="a" style="right:1367px;top:1403.4px;height:36px;line-height:36px;font-size:23.9px;color:#2b2233">6.96/min</div>
<div class="a" style="right:1107px;top:1403.4px;height:36px;line-height:36px;font-size:23.9px;color:#2b2233">1.00s</div>
<div class="a" style="right:847px;top:1403.4px;height:36px;line-height:36px;font-size:23.9px;color:#2b2233">1.01s</div>
<div class="a" style="right:587px;top:1403.4px;height:36px;line-height:36px;font-size:23.9px;color:#2b2233">1.02s</div>
<div class="a" style="right:377px;top:1403.4px;height:36px;line-height:36px;font-size:23.9px;color:#2b2233">17k</div>
<svg class="a" style="left:2643px;top:1408px" width="25" height="25" viewBox="0 0 25 25" fill="none" stroke="#3e3446" stroke-width="2.2" stroke-linejoin="round"><circle cx="12.5" cy="8" r="5.5"/><path d="M2,23 V19 Q2,15 6,15 H19 Q23,15 23,19 V23 Z"/></svg>
<div class="a" style="left:2825.0px;top:1405px;width:6px;height:32px;background:#e0dce5"></div><div class="a" style="left:2837.8px;top:1405px;width:6px;height:32px;background:#e0dce5"></div><div class="a" style="left:2850.5px;top:1405px;width:6px;height:32px;background:#e0dce5"></div><div class="a" style="left:2863.2px;top:1405px;width:6px;height:32px;background:#e0dce5"></div><div class="a" style="left:2876.0px;top:1405px;width:6px;height:32px;background:#e0dce5"></div><div class="a" style="left:2888.8px;top:1405px;width:6px;height:32px;background:#e0dce5"></div><div class="a" style="left:2901.5px;top:1405px;width:6px;height:32px;background:#e0dce5"></div><div class="a" style="left:2914.2px;top:1405px;width:6px;height:32px;background:#e0dce5"></div><div class="a" style="left:2927.0px;top:1405px;width:6px;height:32px;background:#e0dce5"></div><div class="a" style="left:2939.8px;top:1405px;width:6px;height:32px;background:#e0dce5"></div>
<div class="a" style="left:402px;top:1454.6px;width:2572px;height:1.5px;background:#efecf2"></div>
<svg class="a" style="left:436px;top:1478px" width="24" height="24" viewBox="0 0 24 24"><path d="M12,2 L14.9,8.6 L22,9.3 L16.6,14 L18.2,21 L12,17.3 L5.8,21 L7.4,14 L2,9.3 L9.1,8.6 Z" fill="none" stroke="#d9d5df" stroke-width="1.8" stroke-linejoin="round"/></svg>
<div class="a lnk" style="left:492px;top:1471.6px;height:36px;line-height:36px;font-size:24px">/checkout</div>
<div class="a" style="left:884px;top:1471.6px;height:36px;line-height:36px;font-size:23.9px;color:#2b2233">navigation</div>
<svg class="a" style="left:1183px;top:1478px" width="25" height="25" viewBox="0 0 25 25"><rect width="25" height="25" rx="5" fill="#1e1e2a"/>
<g fill="none" stroke="#61dafb" stroke-width="1.1" opacity="0.9"><ellipse cx="12.5" cy="12.5" rx="9.5" ry="3.8"/><ellipse cx="12.5" cy="12.5" rx="9.5" ry="3.8" transform="rotate(60 12.5 12.5)"/><ellipse cx="12.5" cy="12.5" rx="9.5" ry="3.8" transform="rotate(120 12.5 12.5)"/></g><circle cx="12.5" cy="12.5" r="1.8" fill="#a58fd6"/></svg>
<div class="a lnk" style="left:1218px;top:1471.6px;height:36px;line-height:36px;font-size:24px">react</div>
<div class="a" style="right:1367px;top:1471.6px;height:36px;line-height:36px;font-size:23.9px;color:#2b2233">6.24/min</div>
<div class="a" style="right:1107px;top:1471.6px;height:36px;line-height:36px;font-size:23.9px;color:#2b2233">1.01s</div>
<div class="a" style="right:847px;top:1471.6px;height:36px;line-height:36px;font-size:23.9px;color:#2b2233">1.01s</div>
<div class="a" style="right:587px;top:1471.6px;height:36px;line-height:36px;font-size:23.9px;color:#2b2233">1.02s</div>
<div class="a" style="right:377px;top:1471.6px;height:36px;line-height:36px;font-size:23.9px;color:#2b2233">17k</div>
<svg class="a" style="left:2643px;top:1477px" width="25" height="25" viewBox="0 0 25 25" fill="none" stroke="#3e3446" stroke-width="2.2" stroke-linejoin="round"><circle cx="12.5" cy="8" r="5.5"/><path d="M2,23 V19 Q2,15 6,15 H19 Q23,15 23,19 V23 Z"/></svg>
<div class="a" style="left:2825.0px;top:1474px;width:6px;height:32px;background:#e0dce5"></div><div class="a" style="left:2837.8px;top:1474px;width:6px;height:32px;background:#e0dce5"></div><div class="a" style="left:2850.5px;top:1474px;width:6px;height:32px;background:#e0dce5"></div><div class="a" style="left:2863.2px;top:1474px;width:6px;height:32px;background:#e0dce5"></div><div class="a" style="left:2876.0px;top:1474px;width:6px;height:32px;background:#e0dce5"></div><div class="a" style="left:2888.8px;top:1474px;width:6px;height:32px;background:#e0dce5"></div><div class="a" style="left:2901.5px;top:1474px;width:6px;height:32px;background:#e0dce5"></div><div class="a" style="left:2914.2px;top:1474px;width:6px;height:32px;background:#e0dce5"></div><div class="a" style="left:2927.0px;top:1474px;width:6px;height:32px;background:#e0dce5"></div><div class="a" style="left:2939.8px;top:1474px;width:6px;height:32px;background:#e0dce5"></div>
<div class="a" style="left:402px;top:1522.8px;width:2572px;height:1.5px;background:#efecf2"></div>
<svg class="a" style="left:436px;top:1546px" width="24" height="24" viewBox="0 0 24 24"><path d="M12,2 L14.9,8.6 L22,9.3 L16.6,14 L18.2,21 L12,17.3 L5.8,21 L7.4,14 L2,9.3 L9.1,8.6 Z" fill="none" stroke="#d9d5df" stroke-width="1.8" stroke-linejoin="round"/></svg>
<div class="a lnk" style="left:492px;top:1539.8px;height:36px;line-height:36px;font-size:24px">/products-join</div>
<div class="a" style="left:884px;top:1539.8px;height:36px;line-height:36px;font-size:23.9px;color:#2b2233">pageload</div>
<svg class="a" style="left:1183px;top:1546px" width="25" height="25" viewBox="0 0 25 25"><rect width="25" height="25" rx="5" fill="#1e1e2a"/>
<g fill="none" stroke="#61dafb" stroke-width="1.1" opacity="0.9"><ellipse cx="12.5" cy="12.5" rx="9.5" ry="3.8"/><ellipse cx="12.5" cy="12.5" rx="9.5" ry="3.8" transform="rotate(60 12.5 12.5)"/><ellipse cx="12.5" cy="12.5" rx="9.5" ry="3.8" transform="rotate(120 12.5 12.5)"/></g><circle cx="12.5" cy="12.5" r="1.8" fill="#a58fd6"/></svg>
<div class="a lnk" style="left:1218px;top:1539.8px;height:36px;line-height:36px;font-size:24px">react</div>
<div class="a" style="right:1367px;top:1539.8px;height:36px;line-height:36px;font-size:23.9px;color:#2b2233">3.88/min</div>
<div class="a" style="right:1107px;top:1539.8px;height:36px;line-height:36px;font-size:23.9px;color:#2b2233">1.50s</div>
<div class="a" style="right:847px;top:1539.8px;height:36px;line-height:36px;font-size:23.9px;color:#2b2233">1.82s</div>
<div class="a" style="right:587px;top:1539.8px;height:36px;line-height:36px;font-size:23.9px;color:#2b2233">3.04s</div>
<div class="a" style="right:377px;top:1539.8px;height:36px;line-height:36px;font-size:23.9px;color:#2b2233">17k</div>
<svg class="a" style="left:2643px;top:1545px" width="25" height="25" viewBox="0 0 25 25" fill="none" stroke="#3e3446" stroke-width="2.2" stroke-linejoin="round"><circle cx="12.5" cy="8" r="5.5"/><path d="M2,23 V19 Q2,15 6,15 H19 Q23,15 23,19 V23 Z"/></svg>
<div class="a" style="left:2825.0px;top:1542px;width:6px;height:32px;background:#444674"></div><div class="a" style="left:2837.8px;top:1542px;width:6px;height:32px;background:#444674"></div><div class="a" style="left:2850.5px;top:1542px;width:6px;height:32px;background:#444674"></div><div class="a" style="left:2863.2px;top:1542px;width:6px;height:32px;background:#444674"></div><div class="a" style="left:2876.0px;top:1542px;width:6px;height:32px;background:#444674"></div><div class="a" style="left:2888.8px;top:1542px;width:6px;height:32px;background:#444674"></div><div class="a" style="left:2901.5px;top:1542px;width:6px;height:32px;background:#444674"></div><div class="a" style="left:2914.2px;top:1542px;width:6px;height:32px;background:#444674"></div><div class="a" style="left:2927.0px;top:1542px;width:6px;height:32px;background:#444674"></div><div class="a" style="left:2939.8px;top:1542px;width:6px;height:32px;background:#444674"></div>
<div class="a" style="left:352px;top:1500px;width:2656px;height:84px;background:linear-gradient(to bottom,rgba(43,34,51,0) 0%,rgba(43,34,51,0.02) 40%,rgba(43,34,51,0.10) 100%)"></div>
<div class="a" style="left:1281px;top:963px;width:345px;height:413px;border-radius:12px;background:#fff;border:2px solid #e0dce5;box-shadow:0 8px 40px rgba(43,34,51,0.12),0 2px 6px rgba(43,34,51,0.06)"></div>
<div class="a" style="left:1288px;top:1026px;width:330px;height:56px;border-radius:8px;background:#f0eff9"></div>
<svg class="a" style="left:1306px;top:1034px" width="26" height="30" viewBox="0 0 26 30"><path d="M4,15 L10.5,24 L22,6" fill="none" stroke="#5f53c0" stroke-width="2.4" stroke-linecap="round" stroke-linejoin="round"/></svg>
<div class="a" style="left:1342px;top:979.4px;height:36px;line-height:36px;font-size:23.2px;color:#80708f">Transactions Per Minute</div>
<div class="a" style="left:1342px;top:1036.4px;height:36px;line-height:36px;font-size:23.2px;color:#5b4fc0">p50 Duration</div>
<div class="a" style="left:1342px;top:1093.5px;height:36px;line-height:36px;font-size:23.2px;color:#80708f">p75 Duration</div>
<div class="a" style="left:1342px;top:1150.5px;height:36px;line-height:36px;font-size:23.2px;color:#2b2233">p95 Duration</div>
<div class="a" style="left:1342px;top:1207.5px;height:36px;line-height:36px;font-size:23.2px;color:#2b2233">p99 Duration</div>
<div class="a" style="left:1342px;top:1264.6px;height:36px;line-height:36px;font-size:23.2px;color:#2b2233">Failure Rate</div>
<div class="a" style="left:1342px;top:1320.6px;height:36px;line-height:36px;font-size:23.2px;color:#2b2233">Open in Discover</div>
</body></html>
